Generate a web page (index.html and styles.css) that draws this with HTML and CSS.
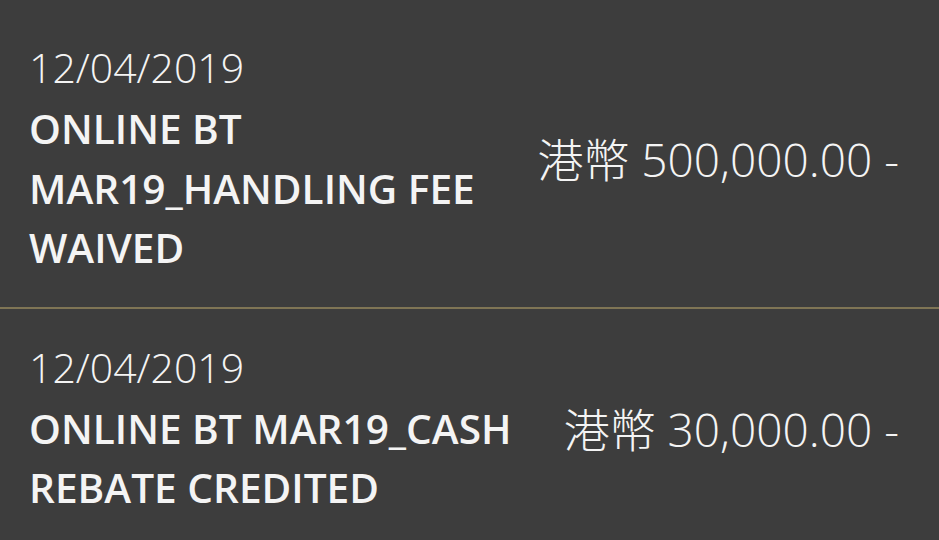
FILE: index.html
```html
<!DOCTYPE html>
<html lang="zh-HK">
<head>
<meta charset="utf-8">
<title>Transactions</title>
<link rel="stylesheet" href="styles.css">
</head>
<body>
<div class="list">
  <div class="row">
    <div class="info">
      <div class="date">12/04/2019</div>
      <div class="desc">ONLINE BT MAR19_HANDLING FEE WAIVED</div>
    </div>
    <div class="amount">港幣 500,000.00 -</div>
  </div>
  <div class="row">
    <div class="info">
      <div class="date">12/04/2019</div>
      <div class="desc">ONLINE BT MAR19_CASH REBATE CREDITED</div>
    </div>
    <div class="amount">港幣 30,000.00 -</div>
  </div>
</div>
</body>
</html>
```
FILE: styles.css
```css
html, body {
  margin: 0;
  padding: 0;
  background: #3d3d3d;
}
body {
  font-family: "Open Sans", "Noto Sans CJK TC", sans-serif;
  color: #f4f4f4;
  overflow: hidden;
}
.list {
  padding-top: 9px;
}
.row {
  display: flex;
  align-items: center;
  padding: 28px 40px 29px 29px;
  border-bottom: 2px solid #7f7555;
}
.info {
  width: 495px;
}
.date {
  font-size: 41px;
  font-weight: 300;
  line-height: 60px;
  padding-bottom: 2px;
}
.desc {
  font-size: 40.6px;
  font-weight: 600;
  line-height: 59.5px;
}
.amount {
  margin-left: auto;
  font-size: 46px;
  font-weight: 300;
  white-space: nowrap;
}
```
